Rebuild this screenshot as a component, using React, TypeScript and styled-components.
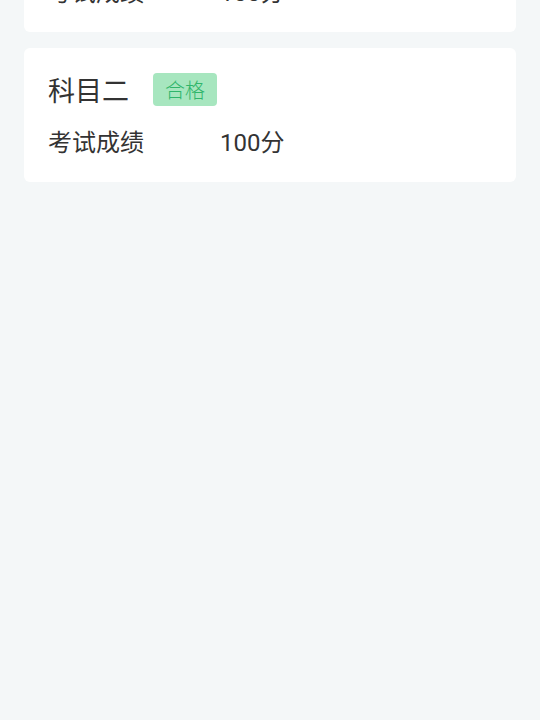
import React from 'react';
import styled, { createGlobalStyle } from 'styled-components';

const GlobalStyle = createGlobalStyle`
  html, body {
    margin: 0;
    padding: 0;
    background: #f4f7f8;
    font-family: Roboto, "Noto Sans CJK SC", sans-serif;
    color: #333;
  }
`;

const results = [
  { subject: '科目一', passed: true, score: 100 },
  { subject: '科目二', passed: true, score: 100 },
];

function App() {
  return (
    <>
      <GlobalStyle />
      <Page>
        <List>
          {results.map((r) => (
            <Card key={r.subject}>
              <Header>
                <Title>{r.subject}</Title>
                {r.passed && <Badge>合格</Badge>}
              </Header>
              <Row>
                <Label>考试成绩</Label>
                <Value>{r.score}分</Value>
              </Row>
            </Card>
          ))}
        </List>
      </Page>
    </>
  );
}

const Page = styled.div`
  height: 720px;
  overflow: hidden;
  background: #f4f7f8;
`;

// list is scrolled: the first card sits partly above the top edge
const List = styled.div`
  display: flex;
  flex-direction: column;
  gap: 16px;
  margin-top: -102px;
  padding: 0 24px 24px;
`;

const Card = styled.div`
  background: #fff;
  border-radius: 6px;
  padding: 25px 24px 24px;
`;

const Header = styled.div`
  display: flex;
  align-items: center;
  height: 33px;
`;

const Title = styled.div`
  font-size: 27px;
  line-height: 33px;
  margin-top: 5px;
  color: #333;
  width: 105px;
`;

const Badge = styled.span`
  display: inline-flex;
  align-items: center;
  height: 33px;
  padding: 0 12px;
  border-radius: 4px;
  background: #a7e6bf;
  color: #2fb56b;
  font-size: 20px;
  font-weight: 300;
`;

const Row = styled.div`
  display: flex;
  margin-top: 22px;
  font-size: 24px;
  line-height: 30px;
`;

const Label = styled.div`
  width: 172px;
  color: #333;
`;

const Value = styled.div`
  color: #333;
`;

export default App;
